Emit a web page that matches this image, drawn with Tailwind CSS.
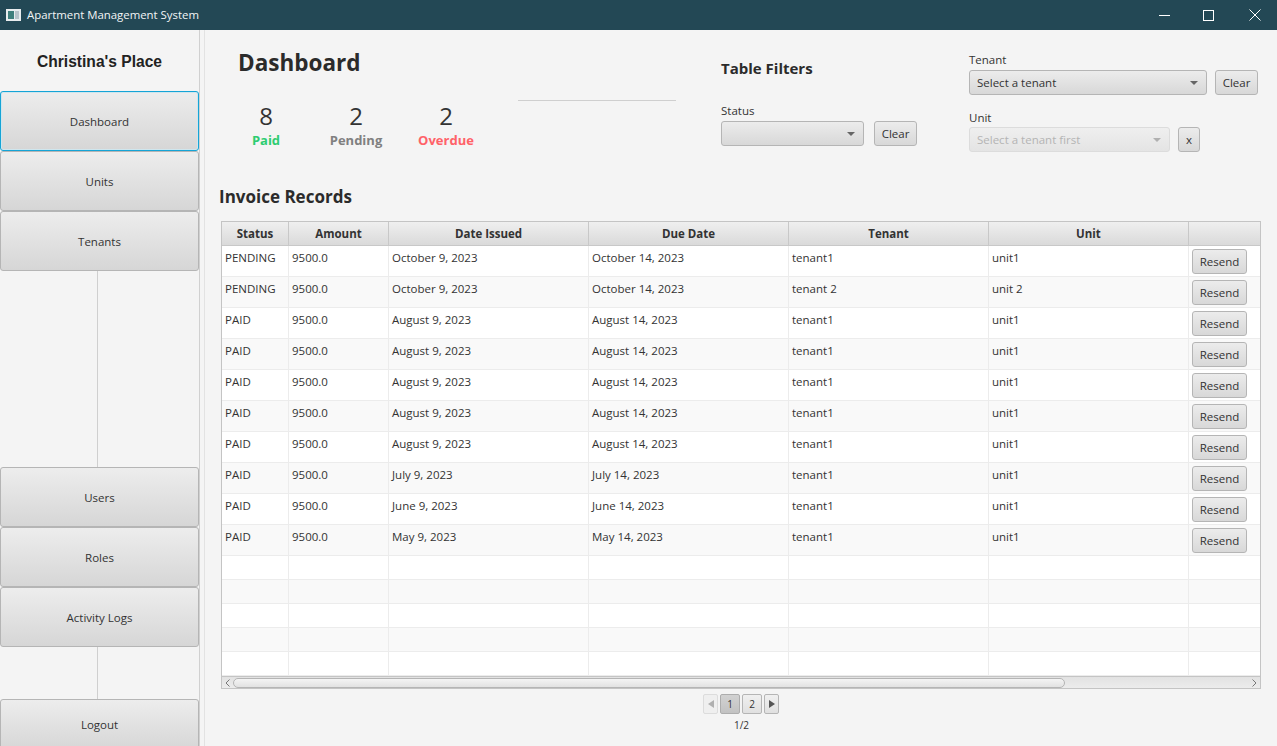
<!DOCTYPE html>
<html lang="en">
<head>
  <meta charset="UTF-8" />
  <title>Apartment Management System</title>
  <script src="https://cdn.jsdelivr.net/npm/@tailwindcss/browser@4"></script>
</head>
<body class="h-[746px] overflow-hidden bg-[#f4f4f4] font-['Open_Sans','Noto_Sans',sans-serif] text-[11.5px] text-[#333]">

  <!-- Title bar -->
  <div class="flex h-[30px] items-center bg-[#234855] text-white">
    <svg class="ml-[6px]" width="15" height="12" viewBox="0 0 15 12">
      <rect width="15" height="12" fill="#e8ecee"/>
      <rect x="2" y="2" width="6" height="8" fill="#3f7f7c"/>
      <rect x="9" y="2" width="4" height="8" fill="#b8c4ca"/>
    </svg>
    <span class="ml-[6px] text-[11.4px] text-[#f2f5f6]">Apartment Management System</span>
    <div class="ml-auto flex items-center">
      <svg class="mr-[33px]" width="11" height="11" viewBox="0 0 11 11"><path d="M0 5.5H11" stroke="#fff"/></svg>
      <svg class="mr-[35px]" width="11" height="11" viewBox="0 0 11 11"><rect x=".5" y=".5" width="10" height="10" fill="none" stroke="#fff"/></svg>
      <svg class="mr-[16px]" width="12" height="12" viewBox="0 0 12 12"><path d="M.5 .5L11.5 11.5M11.5 .5L.5 11.5" stroke="#fff"/></svg>
    </div>
  </div>

  <div class="flex h-[716px]">
    <!-- Sidebar -->
    <aside class="flex w-[199px] shrink-0 flex-col">
      <div class="flex h-[61px] shrink-0 items-center justify-center pt-[2px] font-['Liberation_Sans',sans-serif] text-[15.6px] font-bold text-[#222]">Christina's Place</div>
      <button class="h-[60px] shrink-0 rounded-[3px] border border-[#15a4d6] bg-gradient-to-b from-[#ededed] to-[#d6d6d6] pt-[2px] text-[#333] shadow-[inset_0_0_0_1px_#cfe6ee]">Dashboard</button>
      <button class="h-[60px] shrink-0 rounded-[3px] border border-[#b5b5b5] bg-gradient-to-b from-[#ededed] to-[#d6d6d6] pt-[2px]">Units</button>
      <button class="h-[60px] shrink-0 rounded-[3px] border border-[#b5b5b5] bg-gradient-to-b from-[#ededed] to-[#d6d6d6] pt-[2px]">Tenants</button>
      <div class="ml-[97px] h-[196px] w-px shrink-0 bg-[#cfcfcf]"></div>
      <button class="h-[60px] shrink-0 rounded-[3px] border border-[#b5b5b5] bg-gradient-to-b from-[#ededed] to-[#d6d6d6] pt-[2px]">Users</button>
      <button class="h-[60px] shrink-0 rounded-[3px] border border-[#b5b5b5] bg-gradient-to-b from-[#ededed] to-[#d6d6d6] pt-[2px]">Roles</button>
      <button class="h-[60px] shrink-0 rounded-[3px] border border-[#b5b5b5] bg-gradient-to-b from-[#ededed] to-[#d6d6d6] pt-[2px]">Activity Logs</button>
      <div class="ml-[97px] h-[52px] w-px shrink-0 bg-[#cfcfcf]"></div>
      <button class="h-[52px] shrink-0 rounded-[3px] border border-[#b5b5b5] bg-gradient-to-b from-[#ededed] to-[#d6d6d6]">Logout</button>
    </aside>

    <!-- Splitter -->
    <div class="h-full w-[6px] shrink-0 border-x border-x-[#d0d0d0] border-r-[#e2e2e2] bg-[#f4f4f4]"></div>

    <!-- Main -->
    <main class="min-w-0 flex-1">
      <div class="flex h-[150px]">
        <!-- Heading and counters -->
        <div class="relative w-[516px] shrink-0">
          <h1 class="ml-[33px] mt-[17px] text-[22.5px] leading-[32px] font-bold text-[#2b2b2b]">Dashboard</h1>
          <div class="ml-[16px] mt-[20px] flex">
            <div class="w-[90px] text-center">
              <div class="text-[24px] leading-[33px]">8</div>
              <div class="mt-[1px] text-[13px] leading-[14px] font-bold text-[#2ecc71]">Paid</div>
            </div>
            <div class="w-[90px] text-center">
              <div class="text-[24px] leading-[33px]">2</div>
              <div class="mt-[1px] text-[13px] leading-[14px] font-bold text-[#808080]">Pending</div>
            </div>
            <div class="w-[90px] text-center">
              <div class="text-[24px] leading-[33px]">2</div>
              <div class="mt-[1px] text-[13px] leading-[14px] font-bold text-[#ff6268]">Overdue</div>
            </div>
          </div>
          <div class="absolute left-[313px] top-[70px] h-px w-[158px] bg-[#cfcfcf]"></div>
        </div>

        <!-- Status filter -->
        <div class="w-[248px] shrink-0">
          <h2 class="mt-[28px] text-[15px] leading-[21px] font-bold text-[#2b2b2b]">Table Filters</h2>
          <div class="mt-[24px] leading-[16px]">Status</div>
          <div class="mt-[2px] flex items-center">
            <div class="flex h-[25px] w-[143px] items-center justify-end rounded-[3px] border border-[#b5b5b5] bg-gradient-to-b from-[#ececec] to-[#d8d8d8] pr-[8px]">
              <svg width="8" height="4" viewBox="0 0 8 4"><path d="M0 0H8L4 4Z" fill="#666"/></svg>
            </div>
            <button class="ml-[10px] h-[25px] w-[43px] rounded-[3px] border border-[#b5b5b5] bg-gradient-to-b from-[#ececec] to-[#d8d8d8]">Clear</button>
          </div>
        </div>

        <!-- Tenant and unit filters -->
        <div class="flex-1">
          <div class="mt-[22px] leading-[16px]">Tenant</div>
          <div class="mt-[2px] flex items-center">
            <div class="flex h-[25px] w-[238px] items-center justify-between rounded-[3px] border border-[#b5b5b5] bg-gradient-to-b from-[#ececec] to-[#d8d8d8] pl-[7px] pr-[8px]">
              <span>Select a tenant</span>
              <svg width="8" height="4" viewBox="0 0 8 4"><path d="M0 0H8L4 4Z" fill="#666"/></svg>
            </div>
            <button class="ml-[8px] h-[25px] w-[43px] rounded-[3px] border border-[#b5b5b5] bg-gradient-to-b from-[#ececec] to-[#d8d8d8]">Clear</button>
          </div>
          <div class="mt-[15px] leading-[16px]">Unit</div>
          <div class="mt-[1px] flex items-center">
            <div class="flex h-[25px] w-[201px] items-center justify-between rounded-[3px] border border-[#dcdcdc] bg-gradient-to-b from-[#efefef] to-[#e4e4e4] pl-[7px] pr-[8px] text-[#b4b4b4]">
              <span>Select a tenant first</span>
              <svg width="8" height="4" viewBox="0 0 8 4"><path d="M0 0H8L4 4Z" fill="#b0b0b0"/></svg>
            </div>
            <button class="ml-[8px] h-[25px] w-[22px] rounded-[3px] border border-[#b5b5b5] bg-gradient-to-b from-[#ececec] to-[#d8d8d8]">x</button>
          </div>
        </div>
      </div>

      <h2 class="ml-[14px] mt-[4px] text-[17px] leading-[25px] font-bold text-[#2b2b2b]">Invoice Records</h2>

      <!-- Table -->
      <div class="ml-[16px] mt-[12px] w-[1040px] border border-[#c4c4c4] bg-white">
        <table class="w-[1038px] table-fixed border-separate border-spacing-0">
          <colgroup>
            <col class="w-[67px]" /><col class="w-[100px]" /><col class="w-[200px]" /><col class="w-[200px]" /><col class="w-[200px]" /><col class="w-[200px]" /><col class="w-[71px]" />
          </colgroup>
          <thead>
            <tr class="h-[24px] bg-gradient-to-b from-[#efefef] to-[#d9d9d9] font-bold text-[#333]">
              <th class="border-r border-b border-[#c8c8c8] p-0 font-bold">Status</th>
              <th class="border-r border-b border-[#c8c8c8] p-0 font-bold">Amount</th>
              <th class="border-r border-b border-[#c8c8c8] p-0 font-bold">Date Issued</th>
              <th class="border-r border-b border-[#c8c8c8] p-0 font-bold">Due Date</th>
              <th class="border-r border-b border-[#c8c8c8] p-0 font-bold">Tenant</th>
              <th class="border-r border-b border-[#c8c8c8] p-0 font-bold">Unit</th>
              <th class="border-b border-[#c8c8c8] p-0"></th>
            </tr>
          </thead>
          <tbody id="rows"></tbody>
        </table>
        <!-- Horizontal scroll bar -->
        <div class="flex h-[12px] items-center border-t border-[#c4c4c4] bg-gradient-to-b from-[#e2e2e2] to-[#ececec]">
          <svg class="ml-[3px]" width="5" height="8" viewBox="0 0 5 8"><path d="M4.5 .5L1 4L4.5 7.5" fill="none" stroke="#777"/></svg>
          <div class="ml-[3px] h-[10px] w-[832px] rounded-[5px] border border-[#b5b5b5] bg-gradient-to-b from-[#f4f4f4] to-[#e2e2e2]"></div>
          <svg class="ml-auto mr-[3px]" width="5" height="8" viewBox="0 0 5 8"><path d="M.5 .5L4 4L.5 7.5" fill="none" stroke="#777"/></svg>
        </div>
      </div>

      <!-- Pagination -->
      <div class="ml-[16px] mt-[5px] flex w-[1040px] flex-col items-center">
        <div class="flex h-[20px] items-center gap-[2px]">
          <button class="flex h-[20px] w-[15px] items-center justify-center rounded-[2px] border border-[#dcdcdc] bg-[#efefef]">
            <svg width="6" height="8" viewBox="0 0 6 8"><path d="M6 0V8L0 4Z" fill="#b0b0b0"/></svg>
          </button>
          <button class="h-[20px] w-[20px] rounded-[2px] border border-[#adadad] bg-gradient-to-b from-[#d2d2d2] to-[#c2c2c2] text-[10px] text-[#333]">1</button>
          <button class="h-[20px] w-[20px] rounded-[2px] border border-[#b5b5b5] bg-gradient-to-b from-[#f0f0f0] to-[#e0e0e0] text-[10px] text-[#333]">2</button>
          <button class="flex h-[20px] w-[15px] items-center justify-center rounded-[2px] border border-[#b5b5b5] bg-gradient-to-b from-[#f0f0f0] to-[#e0e0e0]">
            <svg width="6" height="8" viewBox="0 0 6 8"><path d="M0 0V8L6 4Z" fill="#555"/></svg>
          </button>
        </div>
        <div class="mt-[4px] pl-[1px] text-[10px] leading-[14px]">1/2</div>
      </div>
    </main>
  </div>

  <script>
    const invoices = [
      ['PENDING', 'October 9, 2023', 'October 14, 2023', 'tenant1', 'unit1'],
      ['PENDING', 'October 9, 2023', 'October 14, 2023', 'tenant 2', 'unit 2'],
      ['PAID', 'August 9, 2023', 'August 14, 2023', 'tenant1', 'unit1'],
      ['PAID', 'August 9, 2023', 'August 14, 2023', 'tenant1', 'unit1'],
      ['PAID', 'August 9, 2023', 'August 14, 2023', 'tenant1', 'unit1'],
      ['PAID', 'August 9, 2023', 'August 14, 2023', 'tenant1', 'unit1'],
      ['PAID', 'August 9, 2023', 'August 14, 2023', 'tenant1', 'unit1'],
      ['PAID', 'July 9, 2023', 'July 14, 2023', 'tenant1', 'unit1'],
      ['PAID', 'June 9, 2023', 'June 14, 2023', 'tenant1', 'unit1'],
      ['PAID', 'May 9, 2023', 'May 14, 2023', 'tenant1', 'unit1'],
    ];

    const cell = 'border-r border-b border-[#ececec] p-0 pl-[3px] pt-[3px] align-top leading-[17px]';
    let html = '';
    invoices.forEach((inv, i) => {
      html += `<tr class="h-[31px] ${i % 2 ? 'bg-[#f9f9f9]' : 'bg-white'}">
        <td class="${cell}">${inv[0]}</td>
        <td class="${cell}">9500.0</td>
        <td class="${cell}">${inv[1]}</td>
        <td class="${cell}">${inv[2]}</td>
        <td class="${cell}">${inv[3]}</td>
        <td class="${cell}">${inv[4]}</td>
        <td class="border-b border-[#ececec] p-0 pl-[3px] pt-[3px] align-top"><button class="block h-[25px] w-[55px] rounded-[3px] border border-[#b5b5b5] bg-gradient-to-b from-[#ececec] to-[#d8d8d8]">Resend</button></td>
      </tr>`;
    });
    // empty rows under the data
    for (let i = 0; i < 5; i++) {
      html += `<tr class="h-[24px] ${i % 2 ? 'bg-[#f9f9f9]' : 'bg-white'}">` +
        `<td class="border-r border-b border-[#ececec] p-0"></td>`.repeat(6) +
        `<td class="border-b border-[#ececec] p-0"></td></tr>`;
    }
    document.getElementById('rows').innerHTML = html;
  </script>
</body>
</html>
